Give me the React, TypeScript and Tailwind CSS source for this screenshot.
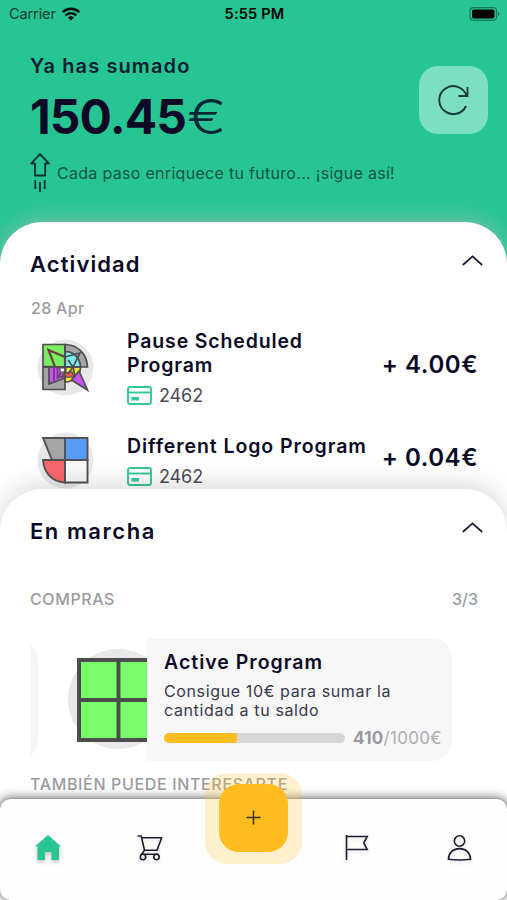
import type { ReactNode } from "react";

function StatusBar() {
  return (
    <div className="flex h-7 items-center justify-between pl-[9px] pr-[7px] text-black">
      <div className="flex w-[200px] items-center gap-[6px]">
        <span className="text-[14.5px] tracking-[-0.1px] text-[#0c3a2f]">Carrier</span>
        <svg className="h-[14px] w-[18px]" viewBox="0 0 18 14" fill="none" stroke="currentColor" strokeWidth="2.4">
          <path d="M0.8 5.2C5.5 .6 12.500 .6 17.200 5.200" />
          <path d="M3.700 8.300c3-2.900 7.600-2.900 10.600 0" />
          <path d="M9 13.400 6 10.400c1.700-1.500 4.300-1.500 6 0z" fill="currentColor" stroke="none" />
        </svg>
      </div>
      <span className="text-[14.5px] font-semibold tracking-[0.2px]">5:55 PM</span>
      <div className="flex w-[200px] items-center justify-end">
        <svg className="h-[14px] w-[31px]" viewBox="0 0 31 14">
          <rect x="1" y=".7" width="26.500" height="12.600" rx="3.500" fill="none" stroke="#12795a" strokeWidth="1.200" />
          <rect x="3" y="2.500" width="22.500" height="9" rx="2" fill="#000" />
          <path d="M29 5c2 .7 2 3.300 0 4z" fill="#12795a" />
        </svg>
      </div>
    </div>
  );
}

function Chevron() {
  return (
    <svg className="h-[11px] w-[21px]" viewBox="0 0 21 11" fill="none" stroke="#1b1b2c" strokeWidth="1.700">
      <path d="M.8 10 10.500 1.400 20.200 10" />
    </svg>
  );
}

function CardIcon() {
  return (
    <svg className="h-[19px] w-[25px]" viewBox="0 0 25 19" fill="none" stroke="#32c99a" strokeWidth="1.900">
      <rect x="1" y="1" width="23" height="17" rx="2" />
      <path d="M1 6.500h23" />
      <rect x="4.500" y="11" width="7.500" height="3.500" fill="#32c99a" stroke="none" />
    </svg>
  );
}

function PauseLogo() {
  return (
    <svg className="h-[57px] w-[57px]" viewBox="0 0 57 57" stroke="#4e4e50" strokeWidth="1.700">
      <circle cx="28.500" cy="28.500" r="28" fill="#e8e8e8" stroke="none" />
      <path d="M6 5.500h22v22H6z" fill="#78ef62" />
      <path d="M6 28h22v22.500H6z" fill="#a5a5a5" />
      <path d="M28 5.500c12 0 22 9 22.500 22.500h-7C43 19 36.500 12.500 28 12.500z" fill="#a5a5a5" />
      <path d="M28 12.500c8 0 15 6 15.500 15.500H28z" fill="#79efee" />
      <path d="M28 28h15.500c0 8-6.500 15-15.500 15z" fill="#f7e52f" />
      <path d="M12 28h16v11l-16 6z" fill="#ca55ec" />
      <path d="m37 38 5-6 8.500 19-16-10z" fill="#ca55ec" />
      <path d="M11.500 11 28 18v10H18z" fill="#78ef62" stroke="#6e3f3b" strokeWidth="2.200" />
      <path d="m28 18 15-4-7 14 2 9-10 1" fill="none" />
      <path d="M17 29v13M20.500 29v11M24 34l-3 4 8-1" fill="none" stroke="#6b3d7c" />
      <path d="m27 34 8-1 2 5H25z" fill="#ec5848" strokeWidth="1.200" />
      <path d="M23 29h6v4h-6z" fill="#f4f4f4" strokeWidth="1.200" />
      <path d="m31 21 5 7-5 7M28 5.500V43M6 28h37" fill="none" />
    </svg>
  );
}

function ShapesLogo() {
  return (
    <svg className="h-[57px] w-[57px]" viewBox="0 0 57 57" stroke="#515153" strokeWidth="1.900">
      <circle cx="28.500" cy="28.500" r="28" fill="#e8e8e8" stroke="none" />
      <path d="M6 6h22v22H15z" fill="#a5a5a5" />
      <path d="M28 6h22.500v22H28z" fill="#579bf6" />
      <path d="M6 28h22v22.500C15 50 7 41 6 28z" fill="#fa686e" />
      <path d="M28 28h22.500v22.500H28z" fill="#f8f8f8" />
    </svg>
  );
}

function Movement({ logo, title, amount }: { logo: ReactNode; title: ReactNode; amount: string }) {
  return (
    <div className="flex items-center pl-[37px] pr-[29px]">
      <div className="shrink-0">{logo}</div>
      <div className="ml-[33px] whitespace-nowrap pt-[2px]">
        {title}
        <div className="mt-[6px] flex h-[25px] items-center gap-[7px]">
          <CardIcon />
          <span className="text-[18px] tracking-[-0.1px] text-[#4b4b58]">2462</span>
        </div>
      </div>
      <div className="mb-[5px] ml-auto whitespace-nowrap text-[24px] font-semibold tracking-[0.55px]">{amount}</div>
    </div>
  );
}

function BottomBar() {
  return (
    <nav className="relative z-10 h-[101px] shrink-0 bg-white">
      <div className="flex h-full items-start justify-between rounded-[10px] bg-[#fefefe] px-[35px] pt-[36px] shadow-[0_0_2px_rgba(0,0,0,0.4),0_-1px_10px_1px_rgba(0,0,0,0.5)]">
        <svg className="h-[26px] w-[26px] drop-shadow-[0_2px_2px_rgba(0,0,0,0.25)]" viewBox="0 0 26 26" fill="#28c592">
          <path d="m13 0 13 11.500h-2V25h-7.500v-8H10v8H2.500V11.500H0z" />
        </svg>
        <svg className="h-[26px] w-[26px] drop-shadow-[0_2px_2px_rgba(0,0,0,0.12)]" viewBox="0 0 26 26" fill="none" stroke="#1d1c31" strokeWidth="1.600">
          <path d="M.5 1h3.700l3.300 14.300H20l4.700-12.500H4.800M7.500 15.300l-3 4h17" strokeLinejoin="round" />
          <circle cx="6" cy="22" r="2.700" />
          <circle cx="19.500" cy="22" r="2.700" />
        </svg>
        <span className="w-[29px]" />
        <svg className="h-[26px] w-[26px] drop-shadow-[0_2px_2px_rgba(0,0,0,0.12)]" viewBox="0 0 26 26" fill="none" stroke="#1d1c31" strokeWidth="1.600">
          <path d="M2.500 0v25M2.500 1.500h20.700l-3.400 6.400 3.400 6.600H2.500" />
        </svg>
        <svg className="h-[26px] w-[26px] drop-shadow-[0_2px_2px_rgba(0,0,0,0.12)]" viewBox="0 0 26 26" fill="none" stroke="#1d1c31" strokeWidth="1.600">
          <circle cx="13.500" cy="6" r="5.200" />
          <path d="M2.500 24.200c.2-6.700 4.700-10.600 11-10.600s10.800 3.900 11 10.600c-6.500.9-15.500.9-22 0z" />
        </svg>
      </div>
      <div className="absolute left-[205px] top-[-26px] rounded-[22px] bg-[#ffc63c]/25 px-[14px] pb-[12px] pt-[11px]">
        <button className="grid h-[68px] w-[69px] place-items-center rounded-[20px] bg-[#ffbd1f] pb-[2px]">
          <svg className="h-[15px] w-[15px]" viewBox="0 0 15 15" stroke="#3b301f" strokeWidth="1.500">
            <path d="M7.500.5v14M.5 7.500h14" />
          </svg>
        </button>
      </div>
    </nav>
  );
}

export default function App() {
  return (
    <div className="flex h-[900px] w-[507px] flex-col overflow-hidden bg-white font-[Inter,sans-serif] text-[#0b0a26]">
      <main className="h-[799px] shrink-0 overflow-hidden">
        <header className="h-[270px] bg-[#27c594]">
          <StatusBar />
          <div className="flex justify-between pl-[30px] pr-[19px] pt-[25px]">
            <div className="whitespace-nowrap">
              <p className="h-[27px] text-[20px] font-semibold leading-[27px] tracking-[1.1px] text-[#06202f]">Ya has sumado</p>
              <p className="mt-[7px] flex h-[60px] items-center text-[48px] font-bold leading-[60px] tracking-[-0.9px]">
                150.45<span className="ml-px origin-left scale-x-[1.22] font-light text-[#082736]">€</span>
              </p>
              <div className="mt-[5px] flex h-[40px] items-center gap-[7px]">
                <svg className="h-[39px] w-[20px]" viewBox="0 0 20 39" fill="none" stroke="#07312f" strokeWidth="1.800">
                  <path d="M10 1.200 1.200 10.500H5v12h10.200v-12H19z" strokeLinejoin="round" />
                  <path d="M5.300 27v9M10 29v10M14.700 27v9" />
                </svg>
                <span className="pt-[2px] text-[16px] tracking-[0.3px] text-[#115546]">Cada paso enriquece tu futuro... ¡sigue así!</span>
              </div>
            </div>
            <button className="mt-[13px] grid h-[68px] w-[69px] place-items-center rounded-[19px] bg-[#7cdfc0]">
              <svg className="h-[32px] w-[32px]" viewBox="0 0 32 32" fill="none" stroke="#153b3b" strokeWidth="1.900">
                <path d="M28 22A14 14 0 1 1 28.500 11.500" />
                <path d="M29.500 3v9h-9" />
              </svg>
            </button>
          </div>
        </header>

        <section className="relative mt-[-48px] h-[320px] rounded-t-[42px] bg-white shadow-[0_-3px_20px_rgba(170,190,180,0.6)]">
          <div className="flex h-[72px] items-start justify-between pl-[30px] pr-[24px] pt-[28px]">
            <h2 className="text-[22px] font-semibold leading-[29px] tracking-[1.1px]">Actividad</h2>
            <div className="pt-[5px]"><Chevron /></div>
          </div>
          <p className="h-[33px] pl-[31px] text-[16px] font-medium leading-[29px] tracking-[0.3px] text-[#9b9b9f]">28 Apr</p>
          <div className="flex flex-col gap-[24px]">
            <Movement
              logo={<PauseLogo />}
              title={<h3 className="text-[19.5px] font-semibold leading-[24px] tracking-[0.85px]">Pause Scheduled<br />Program</h3>}
              amount="+ 4.00€"
            />
            <Movement
              logo={<ShapesLogo />}
              title={<h3 className="text-[19.5px] font-semibold leading-[24px] tracking-[0.93px]">Different Logo Program</h3>}
              amount="+ 0.04€"
            />
          </div>
        </section>

        <section className="relative mt-[-53px] h-[340px] rounded-t-[42px] bg-white shadow-[0_-5px_24px_rgba(0,0,0,0.15)]">
          <div className="flex h-[97px] items-start justify-between pl-[30px] pr-[24px] pt-[27px]">
            <h2 className="text-[22px] font-semibold leading-[30px] tracking-[1.55px]">En marcha</h2>
            <div className="pt-[6px]"><Chevron /></div>
          </div>
          <div className="flex h-[52px] justify-between pl-[30px] pr-[29px] text-[16px] font-medium leading-[26px] text-[#9b9b9f]">
            <span className="tracking-[0.6px]">COMPRAS</span>
            <span>3/3</span>
          </div>
          <div className="flex h-[123px] pl-[30px]">
            <svg className="h-[123px] w-[117px]" viewBox="0 0 117 123">
              <path d="M0 6q8 6 8 15v82q0 9-8 15z" fill="#f7f7f8" />
              <circle cx="88" cy="61" r="50" fill="#e8e8e8" />
              <path d="M49 22h80v80H49zM88.500 22v80M49 62h80" fill="#79ff69" stroke="#4d4d50" strokeWidth="4" />
            </svg>
            <div className="w-[305px] whitespace-nowrap rounded-r-[20px] bg-[#f7f7f8] pl-[17px] pt-[11px]">
              <h3 className="text-[19.5px] font-semibold leading-[27px] tracking-[1px]">Active Program</h3>
              <p className="mt-[6px] text-[16px] leading-[19px] tracking-[0.63px] text-[#39394b]">Consigue 10€ para sumar la<br />cantidad a tu saldo</p>
              <div className="mt-[6px] flex h-[24px] items-center gap-[8px]">
                <div className="h-[10px] w-[181px] overflow-hidden rounded-full bg-[#d6d6d9]">
                  <div className="h-full w-[73px] rounded-r-[3px] bg-[#ffbd1f]" />
                </div>
                <span className="pt-[2px] text-[17px] tracking-[0.3px] text-[#adadb3]"><b className="font-bold text-[#97979f]">410</b>/1000€</span>
              </div>
            </div>
          </div>
          <p className="mt-[10px] pl-[30px] text-[16px] font-medium leading-[26px] tracking-[0.65px] text-[#9b9b9f]">TAMBIÉN PUEDE INTERESARTE</p>
        </section>
      </main>
      <BottomBar />
    </div>
  );
}
